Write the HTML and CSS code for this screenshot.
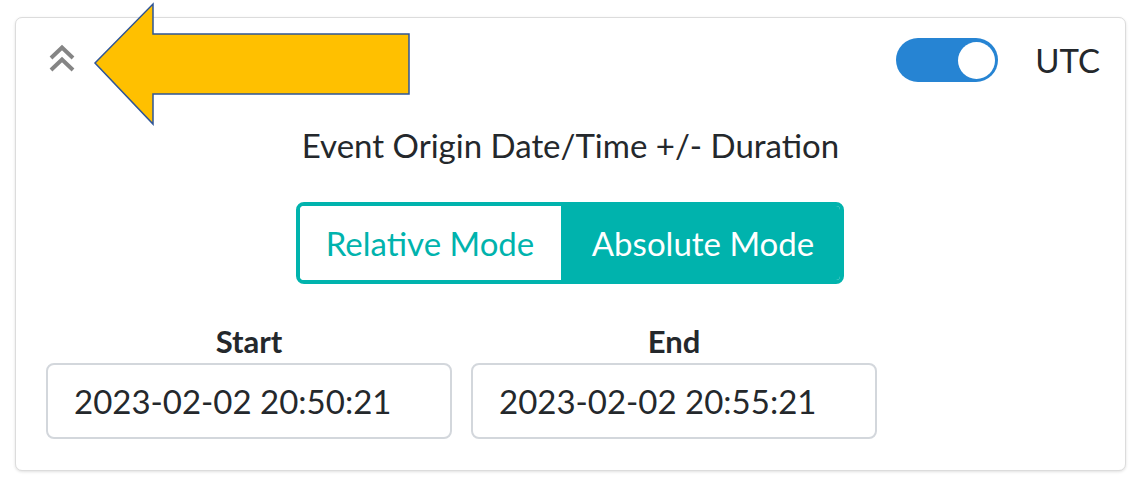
FILE: index.html
```html
<!DOCTYPE html>
<html>
<head>
<meta charset="utf-8">
<link rel="stylesheet" href="styles.css">
</head>
<body>
<div class="card">
  <div class="header">
    <svg class="chevrons" width="28" height="30" viewBox="0 0 28 30">
      <polyline points="2,14 13,3.5 24,14" fill="none" stroke="#858585" stroke-width="4"/>
      <polyline points="2,26 13,15.5 24,26" fill="none" stroke="#858585" stroke-width="4"/>
    </svg>
    <div class="utc">
      <div class="toggle"><div class="knob"></div></div>
      <span class="utc-label">UTC</span>
    </div>
  </div>
  <div class="title">Event Origin Date/Time +/- Duration</div>
  <div class="modes">
    <div class="mode-group">
      <div class="mode">Relative Mode</div>
      <div class="mode active">Absolute Mode</div>
    </div>
  </div>
  <div class="range">
    <div class="field">
      <div class="label">Start</div>
      <div class="input">2023-02-02 20:50:21</div>
    </div>
    <div class="field">
      <div class="label">End</div>
      <div class="input">2023-02-02 20:55:21</div>
    </div>
  </div>
</div>
<svg class="arrow" width="420" height="130" viewBox="0 0 420 130">
  <polygon points="95,63 153,4 153,34 409,34 409,94 153,94 153,124" fill="#FFC000" stroke="#2F5597" stroke-width="1.5"/>
</svg>
</body>
</html>
```

FILE: styles.css
```css
html, body {
  margin: 0;
  padding: 0;
  background: #fff;
}
body {
  font-family: Lato, "Noto Sans", sans-serif;
  color: #24282c;
  position: relative;
  width: 1137px;
  height: 487px;
  overflow: hidden;
}
.card {
  box-sizing: border-box;
  margin: 17px 0 0 15px;
  width: 1111px;
  height: 454px;
  border: 1px solid #dcdcdc;
  border-radius: 7px;
  box-shadow: 0 1px 3px rgba(0,0,0,0.12);
  background: #fff;
}
.header {
  display: flex;
  align-items: center;
  justify-content: space-between;
  padding: 20px 25px 0 33px;
  height: 44px;
}
.chevrons {
  display: block;
  margin-top: -2px;
}
.utc {
  display: flex;
  align-items: center;
  gap: 37px;
}
.toggle {
  width: 102px;
  height: 44px;
  border-radius: 22px;
  background: #2684d3;
  display: flex;
  align-items: center;
  justify-content: flex-end;
  padding-right: 3px;
  box-sizing: border-box;
}
.knob {
  width: 37px;
  height: 37px;
  border-radius: 50%;
  background: #fff;
}
.utc-label {
  font-size: 33px;
  line-height: 40px;
}
.title {
  margin-top: 45px;
  text-align: center;
  font-size: 33px;
  line-height: 36px;
}
.modes {
  display: flex;
  justify-content: center;
  margin-top: 39px;
  padding-right: 2px;
}
.mode-group {
  display: flex;
  width: 548px;
  height: 82px;
  box-sizing: border-box;
  border: 4px solid #00b3ad;
  border-radius: 8px;
  overflow: hidden;
}
.mode {
  display: flex;
  align-items: center;
  justify-content: center;
  font-size: 33px;
  color: #00b3ad;
  background: #fff;
  width: 261px;
}
.mode.active {
  flex: 1;
  background: #00b3ad;
  color: #fff;
  padding-left: 6px;
}
.range {
  display: grid;
  grid-template-columns: 406px 406px;
  column-gap: 19px;
  padding: 0 0 0 30px;
  margin-top: 41px;
}
.field {
  display: flex;
  flex-direction: column;
  align-items: center;
  gap: 6px;
}
.label {
  font-weight: bold;
  font-size: 31px;
  line-height: 32px;
}
.input {
  box-sizing: border-box;
  width: 100%;
  height: 76px;
  border: 2px solid #d3d7dc;
  border-radius: 8px;
  padding-left: 26px;
  display: flex;
  align-items: center;
  font-size: 33px;
}
.arrow {
  position: absolute;
  left: 0;
  top: 0;
}
```
